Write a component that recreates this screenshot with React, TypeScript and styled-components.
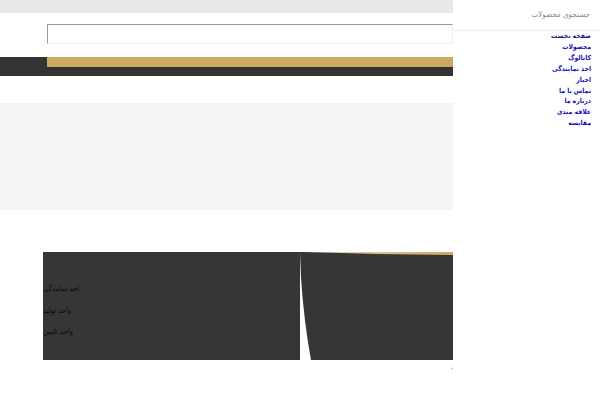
import React from "react";
import styled, { createGlobalStyle } from "styled-components";

const GlobalStyle = createGlobalStyle`
  html, body {
    margin: 0;
    padding: 0;
    background: #ffffff;
    font-family: "DejaVu Sans Condensed", "DejaVu Sans", sans-serif;
  }
`;

const Page = styled.div`
  display: flex;
  width: 600px;
  height: 400px;
  overflow: hidden;
`;

const Main = styled.div`
  width: 453px;
  display: flex;
  flex-direction: column;
`;

const TopBar = styled.div`
  height: 13px;
  background: #e8e8e8;
`;

const Header = styled.div`
  height: 44px;
  padding: 11px 0 0 47px;
  box-sizing: border-box;
`;

const HeaderInput = styled.input`
  display: block;
  width: 100%;
  height: 20px;
  box-sizing: border-box;
  border: 1px solid #f0f0f0;
  border-top-color: #9a9a9a;
  border-left-color: #9a9a9a;
  background: #fff;
  outline: 0;
`;

const DarkBar = styled.div`
  height: 19px;
  background: #333333;
  padding-left: 47px;
`;

const GoldStrip = styled.div`
  height: 10px;
  background: #cea962;
`;

const Spacer = styled.div<{ $h: number }>`
  height: ${(p) => p.$h}px;
`;

const GraySection = styled.div`
  height: 107px;
  background: #f4f4f4;
`;

const Footer = styled.div`
  display: flex;
  height: 108px;
  margin-left: 43px;
`;

const FooterLeft = styled.div`
  width: 257px;
  background: #363636;
  display: flex;
  flex-direction: column;
  align-items: flex-start;
  gap: 11.5px;
  padding-top: 32px;
  box-sizing: border-box;
`;

const FooterLink = styled.div`
  font-size: 7.6px;
  line-height: 10px;
  color: #0a0a0a;
  white-space: nowrap;
  text-align: left;
`;

const FooterRight = styled.div`
  flex: 1;
`;

const FooterShape = styled.svg`
  display: block;
  width: 100%;
  height: 100%;
`;

const Mark = styled.div`
  height: 10px;
  padding: 2px 0 0 451px;
  font-size: 6px;
  line-height: 10px;
  color: #222;
`;

const SidePanel = styled.div`
  width: 147px;
  background: #fff;
  direction: rtl;
  display: flex;
  flex-direction: column;
`;

const SearchBox = styled.input`
  height: 31px;
  box-sizing: border-box;
  border: 0;
  border-bottom: 1px solid #ececec;
  padding: 0 10px 2px 0;
  font-family: "DejaVu Sans Condensed", "DejaVu Sans", sans-serif;
  font-size: 8px;
  color: #777;
  outline: 0;
  direction: rtl;
  &::placeholder {
    color: #8a8a8a;
  }
`;

const Menu = styled.ul`
  list-style: none;
  margin: 0;
  padding: 0 9px 0 0;
`;

const MenuItem = styled.li<{ $first?: boolean }>`
  font-size: 6.8px;
  font-weight: bold;
  line-height: 10.9px;
  color: ${(p) => (p.$first ? "#1c1c80" : "#1414b8")};
  white-space: nowrap;
`;

const menu = [
  "صفحه نخست",
  "محصولات",
  "کاتالوگ",
  "اخذ نمایندگی",
  "اخبار",
  "تماس با ما",
  "درباره ما",
  "علاقه مندی",
  "مقایسه",
];

const footerLinks = ["اخذ نمایندگی", "واحد تولید", "واحد تامین"];

export default function App() {
  return (
    <>
      <GlobalStyle />
      <Page>
        <Main>
          <TopBar />
          <Header>
            <HeaderInput />
          </Header>
          <DarkBar>
            <GoldStrip />
          </DarkBar>
          <Spacer $h={27} />
          <GraySection />
          <Spacer $h={42} />
          <Footer>
            <FooterLeft>
              {footerLinks.map((t) => (
                <FooterLink key={t}>{t}</FooterLink>
              ))}
            </FooterLeft>
            <FooterRight>
              <FooterShape viewBox="0 0 153 108" preserveAspectRatio="none">
                <defs>
                  <linearGradient id="gold" x1="0" x2="1" y1="0" y2="0">
                    <stop offset="0" stopColor="#e9dcb8" />
                    <stop offset="1" stopColor="#cfa862" />
                  </linearGradient>
                </defs>
                <path d="M0 0 L153 0 L153 108 L11 108 Q4 70 1 26 Z" fill="#363636" />
                <path d="M3 0 L153 0 L153 3 Q80 2.4 3 0 Z" fill="url(#gold)" />
              </FooterShape>
            </FooterRight>
          </Footer>
          <Mark>،</Mark>
        </Main>
        <SidePanel>
          <SearchBox placeholder="جستجوی محصولات" />
          <Menu>
            {menu.map((m, i) => (
              <MenuItem key={m} $first={i === 0}>
                {m}
              </MenuItem>
            ))}
          </Menu>
        </SidePanel>
      </Page>
    </>
  );
}
